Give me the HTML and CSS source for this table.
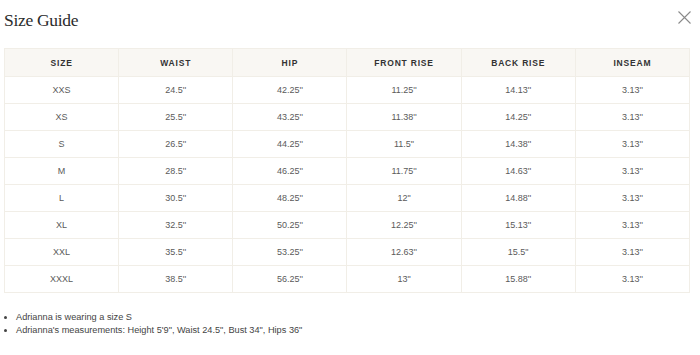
FILE: index.html
```html
<!DOCTYPE html>
<html lang="en">

<head>
    <meta charset="UTF-8">
    <meta name="viewport" content="width=device-width, initial-scale=1.0">
    <title>Size Guide</title>
    <link rel="stylesheet" href="styles.css">
</head>

<body>

    <div class="modal">
        <div class="modal-header">
            <h2 class="title">Size Guide</h2>
            <button class="close" aria-label="Close">
                <svg width="13" height="13" viewBox="0 0 13 13">
                    <path d="M0.5 0.5 L12.5 12.5 M12.5 0.5 L0.5 12.5" stroke="#8a8a8a" stroke-width="1.1" fill="none" />
                </svg>
            </button>
        </div>

        <!-- Size table -->
        <table class="size-table">
            <thead>
                <tr>
                    <th>SIZE</th>
                    <th>WAIST</th>
                    <th>HIP</th>
                    <th>FRONT RISE</th>
                    <th>BACK RISE</th>
                    <th>INSEAM</th>
                </tr>
            </thead>
            <tbody>
                <tr><td>XXS</td><td>24.5''</td><td>42.25''</td><td>11.25''</td><td>14.13''</td><td>3.13''</td></tr>
                <tr><td>XS</td><td>25.5''</td><td>43.25''</td><td>11.38''</td><td>14.25''</td><td>3.13''</td></tr>
                <tr><td>S</td><td>26.5''</td><td>44.25''</td><td>11.5"</td><td>14.38''</td><td>3.13''</td></tr>
                <tr><td>M</td><td>28.5''</td><td>46.25''</td><td>11.75''</td><td>14.63''</td><td>3.13''</td></tr>
                <tr><td>L</td><td>30.5''</td><td>48.25''</td><td>12"</td><td>14.88''</td><td>3.13''</td></tr>
                <tr><td>XL</td><td>32.5''</td><td>50.25''</td><td>12.25''</td><td>15.13''</td><td>3.13''</td></tr>
                <tr><td>XXL</td><td>35.5''</td><td>53.25''</td><td>12.63''</td><td>15.5"</td><td>3.13''</td></tr>
                <tr><td>XXXL</td><td>38.5''</td><td>56.25''</td><td>13"</td><td>15.88''</td><td>3.13''</td></tr>
            </tbody>
        </table>

        <ul class="notes">
            <li>Adrianna is wearing a size S</li>
            <li>Adrianna's measurements: Height 5'9", Waist 24.5", Bust 34", Hips 36"</li>
        </ul>
    </div>

</body>

</html>
```

FILE: styles.css
```css
body {
    margin: 0;
    padding: 0;
    background-color: #fff;
    font-family: "Liberation Sans", Arial, sans-serif;
    color: #555;
}

.modal {
    padding: 9px 10px 0 4px;
}

/* Title row */
.modal-header {
    display: flex;
    justify-content: space-between;
    align-items: flex-start;
    height: 39px;
}

.title {
    margin: 0;
    font-family: "Liberation Serif", "Times New Roman", serif;
    font-weight: normal;
    font-size: 17.5px;
    line-height: 22px;
    color: #2b2b2b;
    letter-spacing: -0.3px;
}

.close {
    border: none;
    background: none;
    padding: 0;
    margin-top: 2px;
    margin-right: -1px;
    cursor: pointer;
    line-height: 0;
}

/* Table */
.size-table {
    width: 686px;
    border-collapse: collapse;
    table-layout: fixed;
    border: 1px solid #f1eee7;
}

.size-table th,
.size-table td {
    text-align: center;
    border: 1px solid #f1eee7;
    padding: 0;
}

.size-table th {
    height: 27px;
    background-color: #f9f7f3;
    color: #333;
    font-size: 8.5px;
    font-weight: bold;
    letter-spacing: 0.8px;
}

.size-table td {
    height: 26px;
    font-size: 9px;
    color: #5a5a5a;
}

/* Notes under the table */
.notes {
    margin: 18px 0 0 0;
    padding: 0 0 0 12px;
    font-size: 9.2px;
    line-height: 13px;
    color: #444;
}
```
